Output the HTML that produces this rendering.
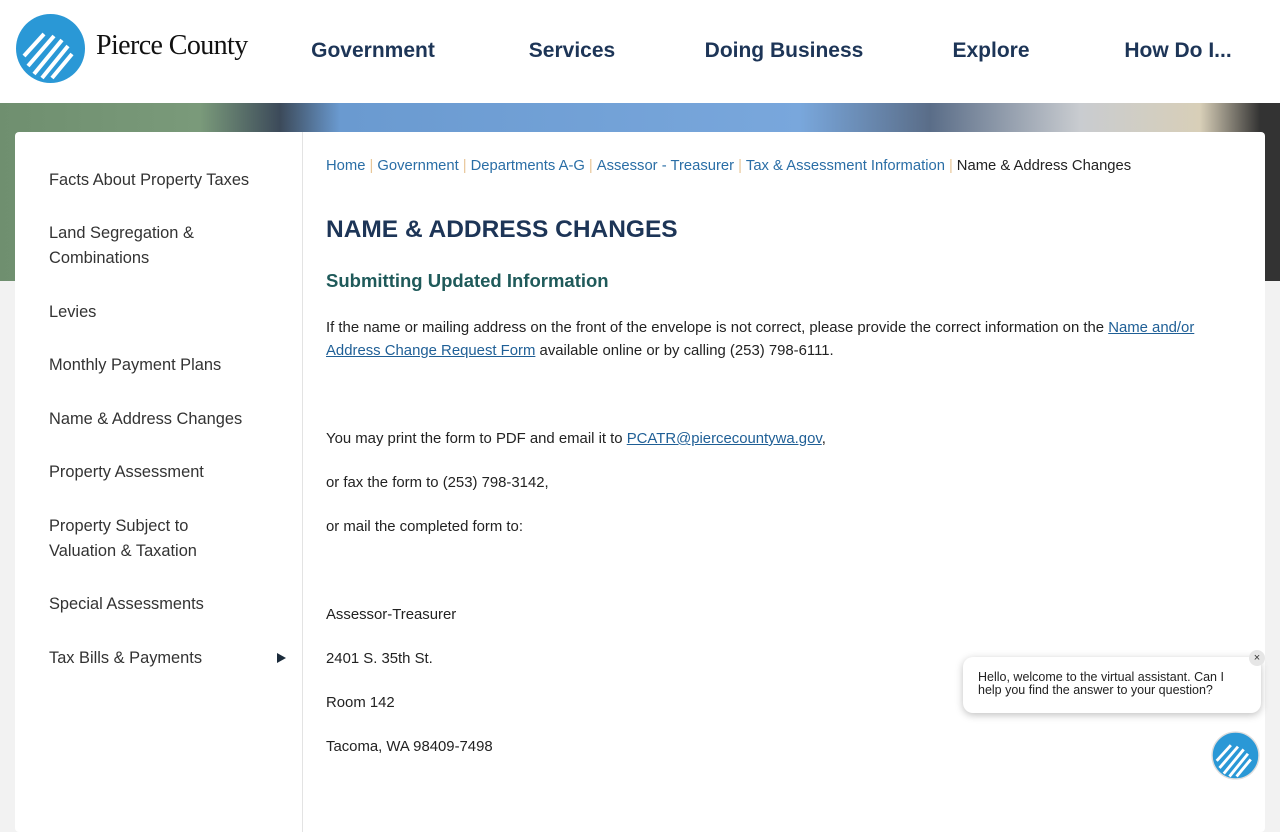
<!DOCTYPE html>
<html><head><meta charset="utf-8"><style>
*{margin:0;padding:0;box-sizing:border-box}
body{width:1280px;height:800px;overflow:hidden;position:relative;background:#f2f2f2;font-family:"Liberation Sans",sans-serif}
header{position:absolute;top:0;left:0;width:1280px;height:103px;background:#fff;z-index:3}
.nav{position:absolute;top:39px;font-weight:bold;font-size:21px;color:#1d3557;white-space:nowrap;transform:translateX(-50%)}
.banner{position:absolute;top:103px;left:0;width:1280px;height:178px;background:linear-gradient(90deg,#6f8f6f 0,#7a9a7a 200px,#3c4a5a 280px,#6a9ad0 340px,#79a7dc 800px,#5a6d88 930px,#c9ccd0 1080px,#d8cfb8 1200px,#333 1260px)}
.card{position:absolute;top:132px;left:15px;width:1250px;height:700px;background:#fff;border-radius:4px}
.side{position:absolute;left:287px;top:0;width:1px;height:700px;background:#e3e3e3}
.si{position:absolute;left:34px;font-size:16.4px;color:#333;line-height:25px}
.c{position:absolute;left:326px;font-size:14.9px;color:#222;line-height:23px;white-space:nowrap}
a{color:#1f5f96;text-decoration:underline}
.bc a{text-decoration:none;color:#2a6ea6}
.sep{color:#e8c79a;margin:0 4px}
</style></head><body>
<header>
<svg style="position:absolute;left:16px;top:14px" width="69" height="69" viewBox="0 0 69 69"><circle cx="34.5" cy="34.5" r="34.5" fill="#2a98d6"/>
<g stroke="#fff" stroke-width="4" stroke-linecap="butt"><line x1="8" y1="42" x2="28" y2="20"/><line x1="12" y1="52" x2="38" y2="22"/><line x1="18" y1="60" x2="46" y2="26"/><line x1="26" y1="64" x2="52" y2="32"/><line x1="36" y1="64" x2="56" y2="40"/></g></svg>
<div style="position:absolute;left:96px;top:30px;font-family:'Liberation Serif',serif;font-size:28px;color:#111;letter-spacing:-0.6px">Pierce County</div>
<div class="nav" style="left:373px">Government</div>
<div class="nav" style="left:572px">Services</div>
<div class="nav" style="left:784px">Doing Business</div>
<div class="nav" style="left:991px">Explore</div>
<div class="nav" style="left:1178px">How Do I...</div>
</header>
<div class="banner"></div>
<div class="card"><div class="side"></div>
<div class="si" style="top:36px">Facts About Property Taxes</div>
<div class="si" style="top:89px">Land Segregation &amp;<br>Combinations</div>
<div class="si" style="top:168px">Levies</div>
<div class="si" style="top:221px">Monthly Payment Plans</div>
<div class="si" style="top:275px">Name &amp; Address Changes</div>
<div class="si" style="top:328px">Property Assessment</div>
<div class="si" style="top:382px">Property Subject to<br>Valuation &amp; Taxation</div>
<div class="si" style="top:460px">Special Assessments</div>
<div class="si" style="top:514px">Tax Bills &amp; Payments</div>
<div style="position:absolute;left:262px;top:521px;width:0;height:0;border-left:9px solid #1b2b3b;border-top:5px solid transparent;border-bottom:5px solid transparent"></div>
</div>
<div class="c bc" style="top:155px;font-size:14.8px"><a>Home</a><span class="sep">|</span><a>Government</a><span class="sep">|</span><a>Departments A-G</a><span class="sep">|</span><a>Assessor - Treasurer</a><span class="sep">|</span><a>Tax &amp; Assessment Information</a><span class="sep">|</span>Name &amp; Address Changes</div>
<div class="c" style="top:214px;font-size:24.5px;font-weight:bold;color:#1d3557;line-height:32px">NAME &amp; ADDRESS CHANGES</div>
<div class="c" style="top:268px;font-size:18.5px;font-weight:bold;color:#1f5a5a;line-height:26px">Submitting Updated Information</div>
<div class="c" style="top:317px">If the name or mailing address on the front of the envelope is not correct, please provide the correct information on the <a>Name and/or</a><br><a>Address Change Request Form</a> available online or by calling (253) 798-6111.</div>
<div class="c" style="top:428px">You may print the form to PDF and email it to <a>PCATR@piercecountywa.gov</a>,</div>
<div class="c" style="top:472px">or fax the form to (253) 798-3142,</div>
<div class="c" style="top:516px">or mail the completed form to:</div>
<div class="c" style="top:604px">Assessor-Treasurer</div>
<div class="c" style="top:648px">2401 S. 35th St.</div>
<div class="c" style="top:692px">Room 142</div>
<div class="c" style="top:736px">Tacoma, WA 98409-7498</div>
<div style="position:absolute;left:963px;top:657px;width:298px;height:56px;background:#fff;border-radius:10px;box-shadow:0 2px 8px rgba(0,0,0,.25);font-size:12.5px;color:#222;line-height:13px;padding:14px 15px">Hello, welcome to the virtual assistant. Can I help you find the answer to your question?</div>
<div style="position:absolute;left:1249px;top:650px;width:16px;height:16px;border-radius:50%;background:#e6e6e6;font-size:11px;text-align:center;line-height:16px;color:#333">×</div>
<svg style="position:absolute;left:1211px;top:731px" width="49" height="49" viewBox="0 0 69 69"><circle cx="34.5" cy="34.5" r="33" fill="#2a98d6" stroke="#ddd" stroke-width="2"/>
<g stroke="#fff" stroke-width="4"><line x1="8" y1="42" x2="28" y2="20"/><line x1="12" y1="52" x2="38" y2="22"/><line x1="18" y1="60" x2="46" y2="26"/><line x1="26" y1="64" x2="52" y2="32"/><line x1="36" y1="64" x2="56" y2="40"/></g></svg>
</body></html>
